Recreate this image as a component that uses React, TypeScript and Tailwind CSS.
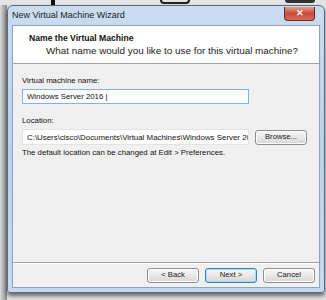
const font = { fontFamily: '"Liberation Sans", Arial, sans-serif' };

function WinButton({ label, primary }: { label: string; primary?: boolean }) {
  return (
    <button
      className={
        "shrink-0 w-[52px] h-[15px] rounded-[3px] border text-[7.7px] text-[#1a1a1a] bg-gradient-to-b from-[#f6f6f6] via-[#e9e9e9] to-[#d6d6d6] " +
        (primary ? "border-[#3c7fb1] shadow-[inset_0_0_0_1px_#a8dcf6]" : "border-[#8e8f8f] shadow-[inset_0_0_0_1px_#fcfcfc]")
      }
    >
      {label}
    </button>
  );
}

export default function App() {
  return (
    <div className="w-[326px] h-[300px] bg-[#e4e4e4] overflow-hidden relative" style={font}>
      {/* bits of the window behind */}
      <div className="absolute left-[51px] top-0 w-[4px] h-[5px] bg-[#111]" />
      <div className="absolute left-[160px] top-0 w-[30px] h-[4px] rounded-b-[4px] border-2 border-t-0 border-[#222]" />
      <div className="absolute left-[285px] top-0 w-[30px] h-[3px] bg-[#333] rounded-b-full" />
      <div className="absolute left-0 top-[5px] w-[7px] h-[295px] bg-gradient-to-r from-[#d9d9d9] to-[#8a8a8a]" />

      <div className="ml-[7px] mt-[5px] w-[318px] h-[288px] rounded-t-[6px] rounded-b-[3px] border border-[#5c6b7c] bg-gradient-to-b from-[#c9dcf0] via-[#b9d1ea] to-[#c6daee] shadow-[0_3px_4px_rgba(0,0,0,0.55)] flex flex-col relative">
        <div className="h-[19px] flex items-center pl-[4px] pt-[1px] text-[9px] text-[#1b1b1b]">New Virtual Machine Wizard</div>
        <div className="absolute right-[9px] top-[1px] w-[31px] h-[14px] rounded-b-[4px] border border-[#6b2a22] border-t-0 bg-gradient-to-b from-[#e49a88] via-[#c94a36] to-[#d3705b] flex items-center justify-center text-white text-[9px] font-bold leading-none">
          ✕
        </div>

        <div className="mx-[4px] flex-1 mb-[4px] border border-[#8ea4bd] bg-[#f0f0f0] flex flex-col">
          <div className="h-[38px] bg-white border-b border-[#a0a0a0] pl-[16px] pt-[6px]">
            <div className="text-[8.6px] font-bold text-[#111] leading-[12px]">Name the Virtual Machine</div>
            <div className="text-[9.9px] text-[#222] leading-[12px] pl-[17px] mt-[1px]">
              What name would you like to use for this virtual machine?
            </div>
          </div>

          <div className="flex-1 px-[9px] pt-[12px] text-[7.8px] text-[#111]">
            <div className="leading-[10px]">Virtual machine name:</div>
            <input
              readOnly
              value="Windows Server 2016 |"
              className="block mt-[3px] w-[227px] h-[15px] bg-white border border-[#7eb4ea] pl-[4px] text-[7.8px] text-[#111] outline-none"
            />
            <div className="mt-[12px] leading-[10px]">Location:</div>
            <div className="mt-[3px] flex items-center gap-[6px]">
              <input
                readOnly
                value="C:\Users\cisco\Documents\Virtual Machines\Windows Server 2016"
                className="block shrink-0 w-[227px] h-[16px] bg-white border border-[#e3e3e3] pl-[4px] text-[7.9px] text-[#111] outline-none"
              />
              <WinButton label="Browse..." />
            </div>
            <div className="mt-[3px] leading-[10px]">The default location can be changed at Edit &gt; Preferences.</div>
          </div>

          <div className="h-[25px] border-t border-[#a0a0a0] shadow-[inset_0_1px_0_#fff] flex items-center justify-end gap-[6px] pr-[4px]">
            <WinButton label="< Back" />
            <WinButton label="Next >" primary />
            <WinButton label="Cancel" />
          </div>
        </div>
      </div>
    </div>
  );
}
